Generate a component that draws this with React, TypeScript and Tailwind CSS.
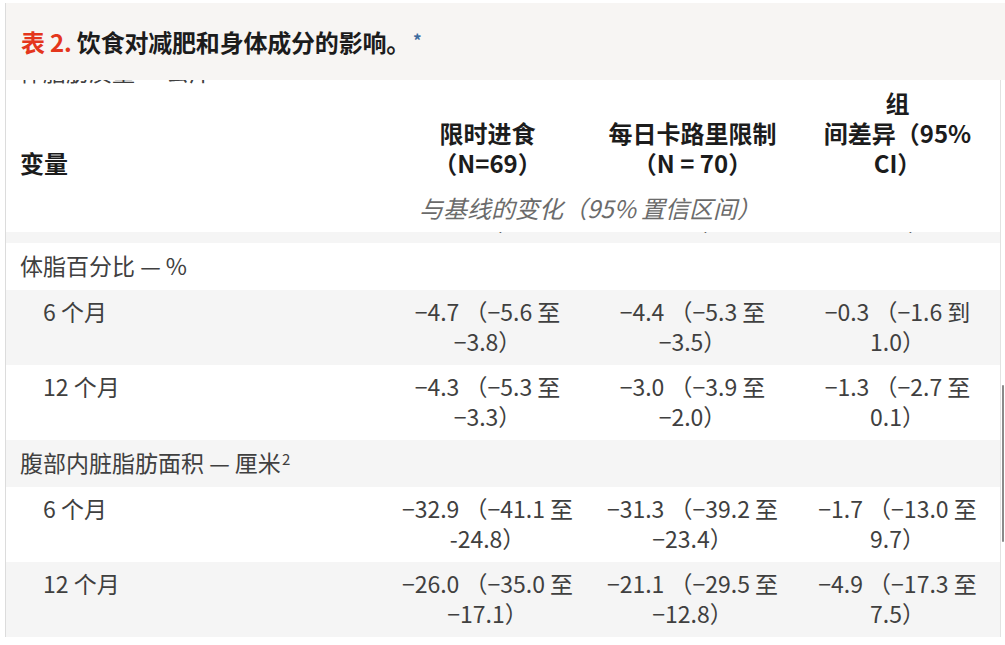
import React from "react";

type Row = {
  label: string;
  sub?: boolean;
  sup?: string;
  cells?: [string, string][];
  shade: boolean;
};

const rows: Row[] = [
  { label: "体脂百分比 — %", shade: false },
  {
    label: "6 个月",
    sub: true,
    shade: true,
    cells: [
      ["−4.7 （−5.6 至", "−3.8）"],
      ["−4.4 （−5.3 至", "−3.5）"],
      ["−0.3 （−1.6 到", "1.0）"],
    ],
  },
  {
    label: "12 个月",
    sub: true,
    shade: false,
    cells: [
      ["−4.3 （−5.3 至", "−3.3）"],
      ["−3.0 （−3.9 至", "−2.0）"],
      ["−1.3 （−2.7 至", "0.1）"],
    ],
  },
  { label: "腹部内脏脂肪面积 — 厘米", sup: "2", shade: true },
  {
    label: "6 个月",
    sub: true,
    shade: false,
    cells: [
      ["−32.9 （−41.1 至", "-24.8）"],
      ["−31.3 （−39.2 至", "−23.4）"],
      ["−1.7 （−13.0 至", "9.7）"],
    ],
  },
  {
    label: "12 个月",
    sub: true,
    shade: true,
    cells: [
      ["−26.0 （−35.0 至", "−17.1）"],
      ["−21.1 （−29.5 至", "−12.8）"],
      ["−4.9 （−17.3 至", "7.5）"],
    ],
  },
];

const grid = "grid grid-cols-[379px_205px_205px_205px]";

const App: React.FC = () => {
  return (
    <div className="w-[1005px] h-[645px] bg-white pt-[3px] pl-[5px] font-['Noto_Sans_CJK_SC','Noto_Sans',sans-serif] text-[#404040] overflow-hidden">
      <div className="border-l border-[#dcdcdc] w-[1000px]">
        <div className="h-[77px] bg-[#f7f5f3] flex items-center pl-[15px]">
          <h2 className="text-[24px] leading-[30px] font-bold text-[#1c1c1c] -tracking-[0.2px]">
            <span className="text-[#e4361c]">表 2.</span> 饮食对减肥和身体成分的影响。
            <sup className="-top-[5px] text-[17px] text-[#3d6b9e] ml-[3px] font-bold">*</sup>
          </h2>
        </div>

        <div className="relative border-r border-[#e2e2e2] w-[995px]">
          {/* rows scrolled under the sticky header */}
          <div className="h-[4px] overflow-hidden bg-white">
            <div className="-mt-[24px] pl-[14px] text-[23px] leading-[30px]">体脂肪质量 — 公斤</div>
          </div>

          <div className={`${grid} items-end pt-[4px] text-[24px] leading-[30px] font-bold text-[#1c1c1c] text-center`}>
            <div className="text-left pl-[14px]">变量</div>
            <div>
              <div>限时进食</div>
              <div>（N=69）</div>
            </div>
            <div>
              <div>每日卡路里限制</div>
              <div>（N = 70）</div>
            </div>
            <div>
              <div>组</div>
              <div>间差异（95%</div>
              <div>CI）</div>
            </div>
          </div>
          <div className={`${grid} pt-[15px] pb-[9px]`}>
            <div></div>
            <div className="col-span-3 pl-[34px] text-[24px] leading-[30px] italic text-[#6b6b6b]">
              与基线的变化（95% 置信区间）
            </div>
          </div>

          <div className={`${grid} h-[11px] overflow-hidden bg-[#f5f5f5] text-center text-[23px] leading-[30px]`}>
            <div></div>
            <div className="-mt-[26px]">−1.9）</div>
            <div className="-mt-[26px]">−1.2）</div>
            <div className="-mt-[26px]">−0.1）</div>
          </div>

          {rows.map((r, i) => (
            <div
              key={i}
              className={`${grid} text-[23px] leading-[30px] ${r.shade ? "bg-[#f5f5f5]" : "bg-white"} ${
                r.cells ? "pt-[6px] pb-[9px]" : "pt-[7px] pb-[10px]"
              }`}
            >
              <div className={r.sub ? "pl-[37px]" : "pl-[14px]"}>
                {r.label}
                {r.sup && <sup className="text-[15px] ml-[1px]">{r.sup}</sup>}
              </div>
              {r.cells
                ? r.cells.map((c, j) => (
                    <div key={j} className="text-center">
                      <div>{c[0]}</div>
                      <div>{c[1]}</div>
                    </div>
                  ))
                : null}
            </div>
          ))}

          {/* scrollbar thumb */}
          <div className="absolute right-[-4px] top-[305px] w-[2px] h-[157px] bg-[#8a8a8a] rounded-full"></div>
        </div>
      </div>
    </div>
  );
};

export default App;
